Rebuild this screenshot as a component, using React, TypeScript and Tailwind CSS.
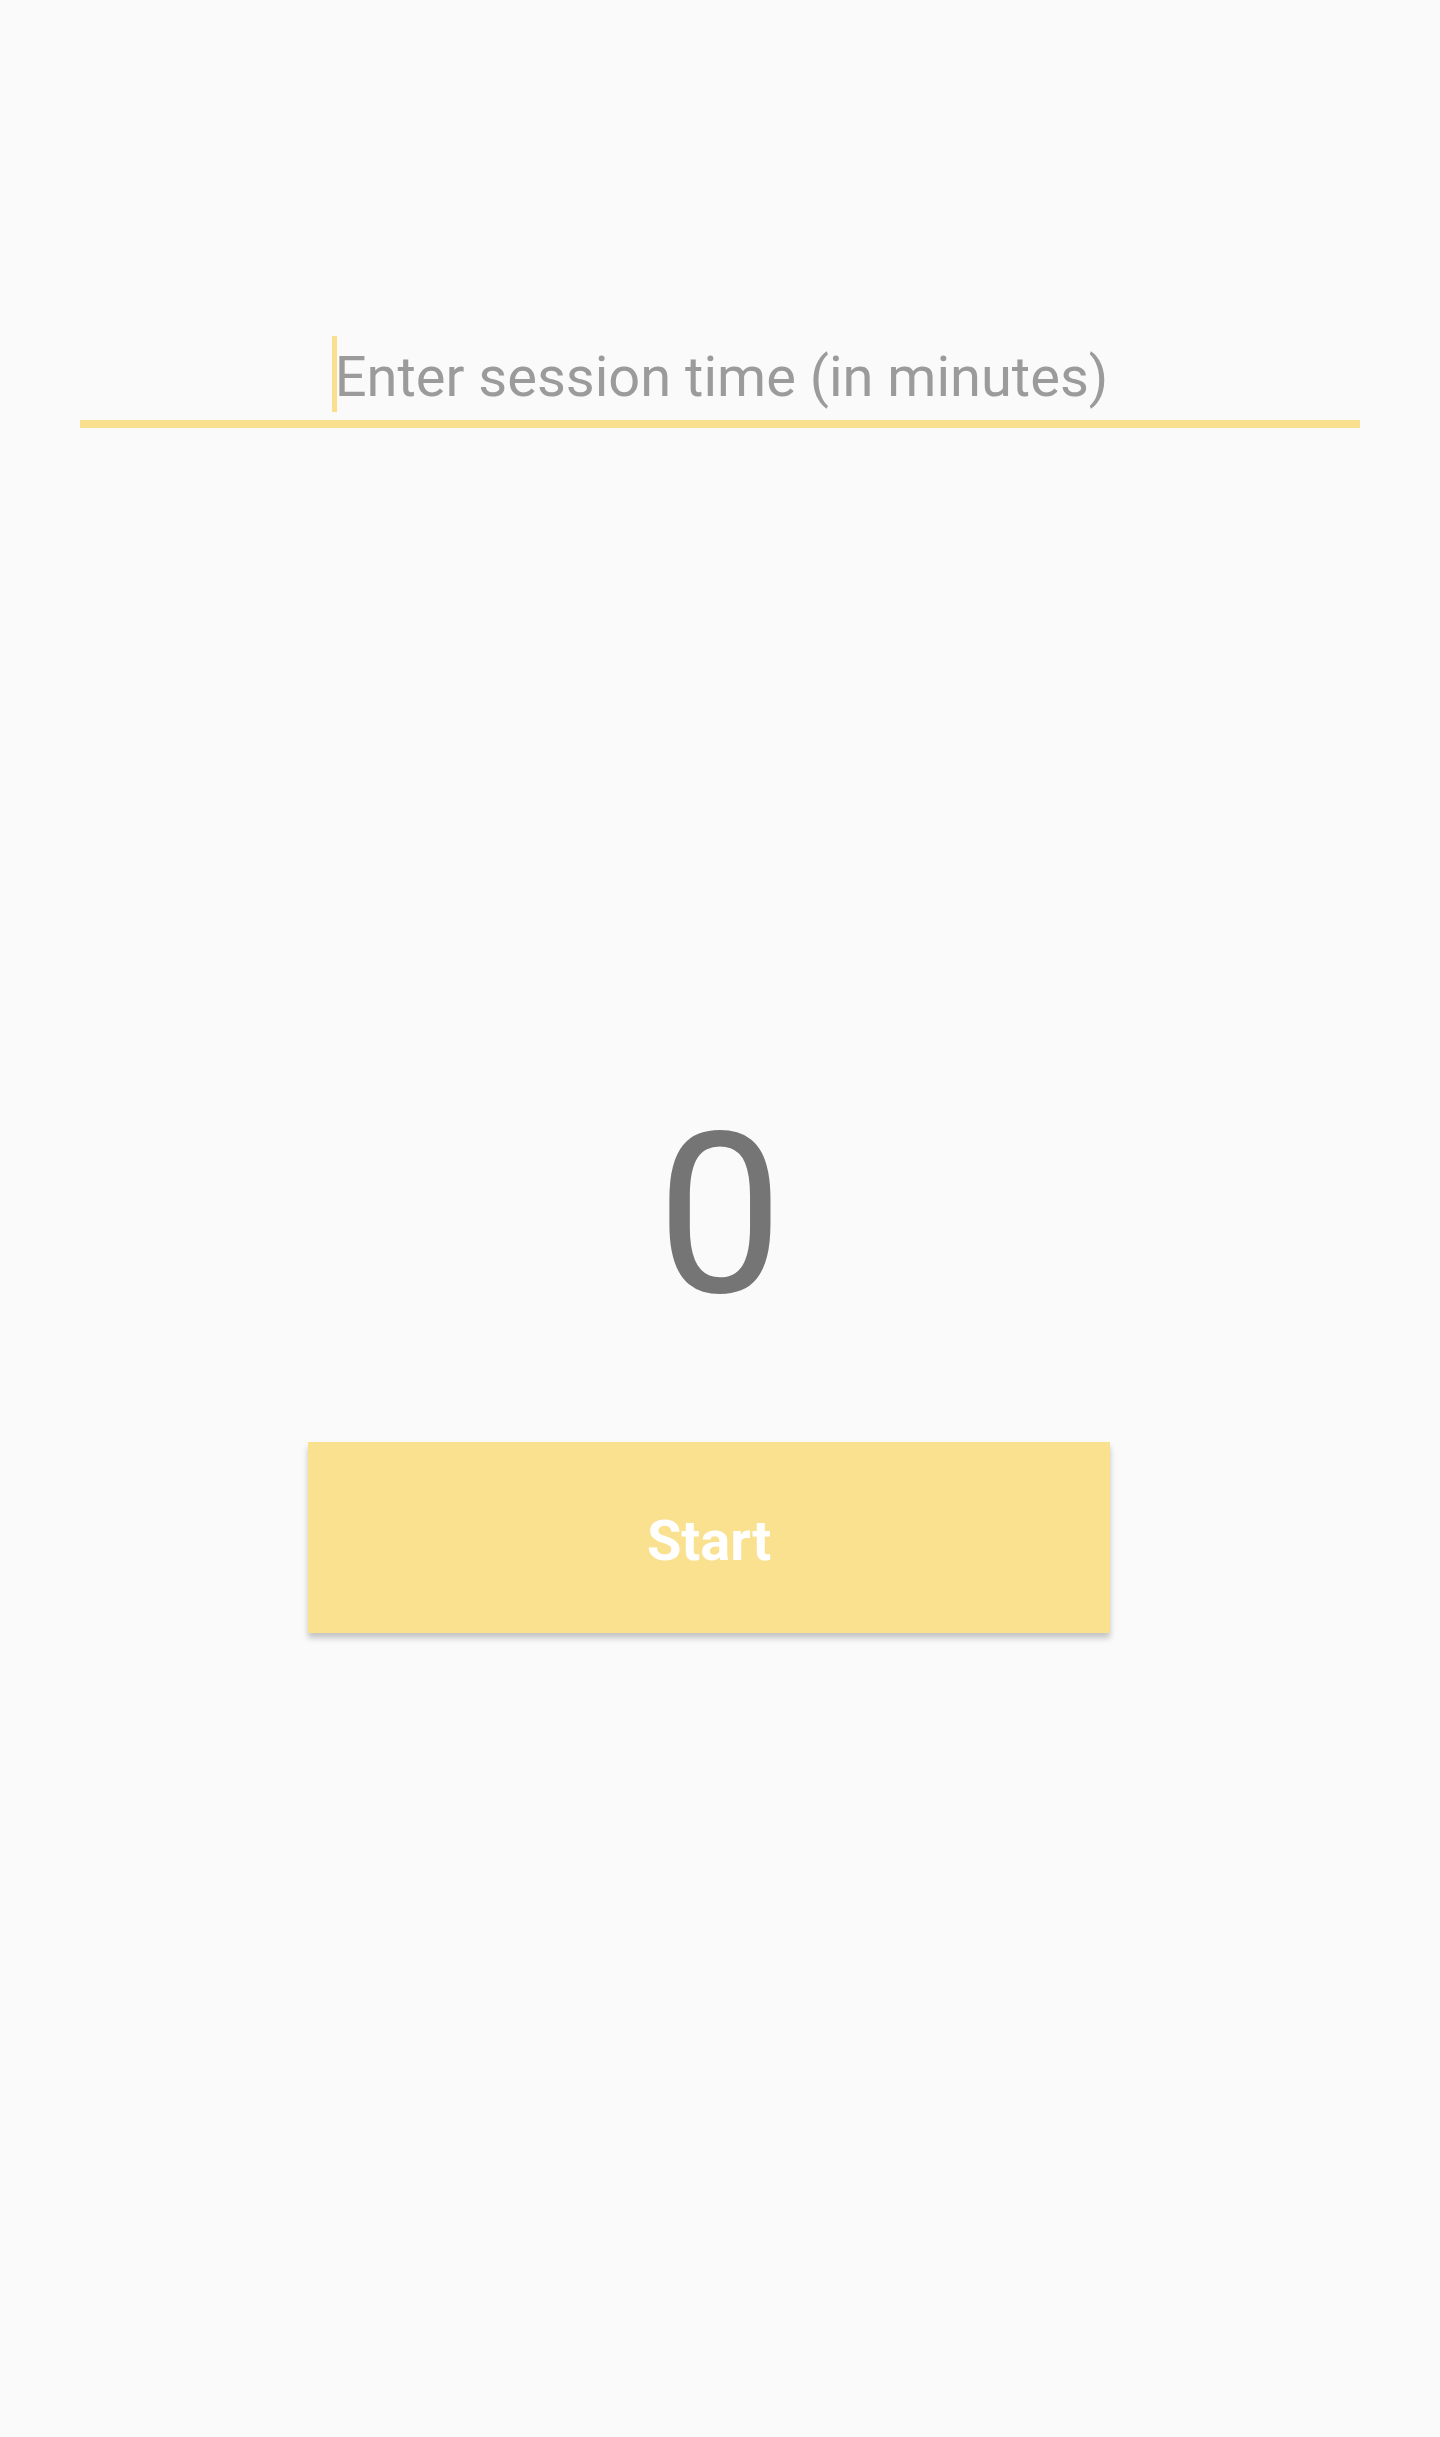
export default function App() {
  return (
    <main className="min-h-[2437px] w-full bg-[#fafafa] font-['Roboto',sans-serif]">
      {/* session time field */}
      <div className="px-20 pt-[336px]">
        <div role="textbox" className="flex items-start justify-center">
          <span className="-mr-[2px] h-[76px] w-[5px] bg-[#fadf8f]" />
          <span className="text-[56px] leading-[82px] text-[#9b9b9b]">
            Enter session time (in minutes)
          </span>
        </div>
        <div className="mt-[2px] h-[8px] w-full bg-[#fadf8f]" />
      </div>

      {/* countdown */}
      <div className="mt-[675px] text-center text-[225px] leading-none text-[#757575]">
        0
      </div>

      <button
        type="button"
        className="ml-[308px] mt-[114px] flex h-[191px] w-[802px] items-center justify-center bg-[#fae18f] pt-[6px] text-[56px] font-bold text-white shadow-[0_5px_6px_rgba(0,0,0,0.22)]"
      >
        Start
      </button>
    </main>
  )
}
